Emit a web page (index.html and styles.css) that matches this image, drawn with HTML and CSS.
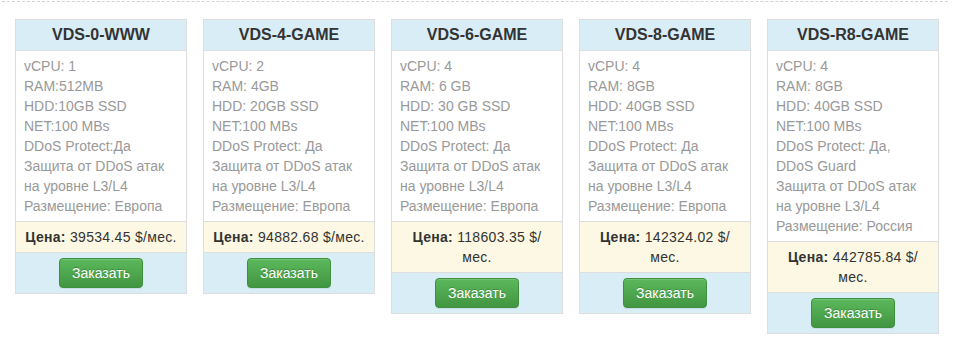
FILE: index.html
```html
<!DOCTYPE html>
<html lang="ru">
<head>
<meta charset="utf-8">
<title>VDS тарифы</title>
<link rel="stylesheet" href="styles.css">
</head>
<body>
<div class="plans">
  <div class="plan">
    <div class="plan-title">VDS-0-WWW</div>
    <div class="plan-specs">
      vCPU: 1<br>RAM:512MB<br>HDD:10GB SSD<br>NET:100 MBs<br>DDoS Protect:Да<br>Защита от DDoS атак на уровне L3/L4<br>Размещение: Европа
    </div>
    <div class="plan-price"><b>Цена:</b> 39534.45 $/<wbr>мес.</div>
    <div class="plan-order"><a class="btn-order" href="#">Заказать</a></div>
  </div>
  <div class="plan">
    <div class="plan-title">VDS-4-GAME</div>
    <div class="plan-specs">
      vCPU: 2<br>RAM: 4GB<br>HDD: 20GB SSD<br>NET:100 MBs<br>DDoS Protect: Да<br>Защита от DDoS атак на уровне L3/L4<br>Размещение: Европа
    </div>
    <div class="plan-price"><b>Цена:</b> 94882.68 $/<wbr>мес.</div>
    <div class="plan-order"><a class="btn-order" href="#">Заказать</a></div>
  </div>
  <div class="plan">
    <div class="plan-title">VDS-6-GAME</div>
    <div class="plan-specs">
      vCPU: 4<br>RAM: 6 GB<br>HDD: 30 GB SSD<br>NET:100 MBs<br>DDoS Protect: Да<br>Защита от DDoS атак на уровне L3/L4<br>Размещение: Европа
    </div>
    <div class="plan-price"><b>Цена:</b> 118603.35 $/<wbr>мес.</div>
    <div class="plan-order"><a class="btn-order" href="#">Заказать</a></div>
  </div>
  <div class="plan">
    <div class="plan-title">VDS-8-GAME</div>
    <div class="plan-specs">
      vCPU: 4<br>RAM: 8GB<br>HDD: 40GB SSD<br>NET:100 MBs<br>DDoS Protect: Да<br>Защита от DDoS атак на уровне L3/L4<br>Размещение: Европа
    </div>
    <div class="plan-price"><b>Цена:</b> 142324.02 $/<wbr>мес.</div>
    <div class="plan-order"><a class="btn-order" href="#">Заказать</a></div>
  </div>
  <div class="plan">
    <div class="plan-title">VDS-R8-GAME</div>
    <div class="plan-specs">
      vCPU: 4<br>RAM: 8GB<br>HDD: 40GB SSD<br>NET:100 MBs<br>DDoS Protect: Да, DDoS Guard<br>Защита от DDoS атак на уровне L3/L4<br>Размещение: Россия
    </div>
    <div class="plan-price"><b>Цена:</b> 442785.84 $/<wbr>мес.</div>
    <div class="plan-order"><a class="btn-order" href="#">Заказать</a></div>
  </div>
</div>
</body>
</html>
```
FILE: styles.css
```css
html, body {
  margin: 0;
  padding: 0;
  background: #fff;
}

body {
  font-family: "Liberation Sans", Arial, sans-serif;
  font-size: 14px;
  line-height: 20px;
  color: #333;
}

/* row of tariff cards under a dotted divider */
.plans {
  display: flex;
  align-items: flex-start;
  gap: 16px;
  width: 946px;
  margin: 1px 0 0 2px;
  padding: 17px 0 0 13px;
  box-sizing: border-box;
  border-top: 1px dashed #d4d4d4;
}

.plan {
  width: 172px;
  flex: 0 0 172px;
  box-sizing: border-box;
  border: 1px solid #dddddd;
  background: #fff;
}

.plan > div + div {
  border-top: 1px solid #dddddd;
}

.plan-title {
  background: #d9edf7;
  padding: 5px;
  text-align: center;
  font-size: 16px;
  font-weight: bold;
  color: #333;
}

.plan-specs {
  padding: 5px 8px;
  color: #999;
}

.plan-price {
  background: #fcf8e3;
  padding: 5px 8px;
  text-align: center;
  color: #333;
  letter-spacing: 0.3px;
}

.plan-order {
  background: #d9edf7;
  padding: 5px;
  text-align: center;
}

.btn-order {
  display: inline-block;
  box-sizing: border-box;
  height: 30px;
  padding: 4px 12px;
  font-size: 14px;
  line-height: 20px;
  color: #fff;
  text-decoration: none;
  border: 1px solid #3e8f3e;
  border-radius: 4px;
  background-color: #5cb85c;
  background-image: linear-gradient(to bottom, #5cb85c 0, #419641 100%);
  text-shadow: 0 -1px 0 rgba(0, 0, 0, 0.2);
  box-shadow: inset 0 1px 0 rgba(255, 255, 255, 0.15), 0 1px 1px rgba(0, 0, 0, 0.075);
  vertical-align: middle;
}
```
